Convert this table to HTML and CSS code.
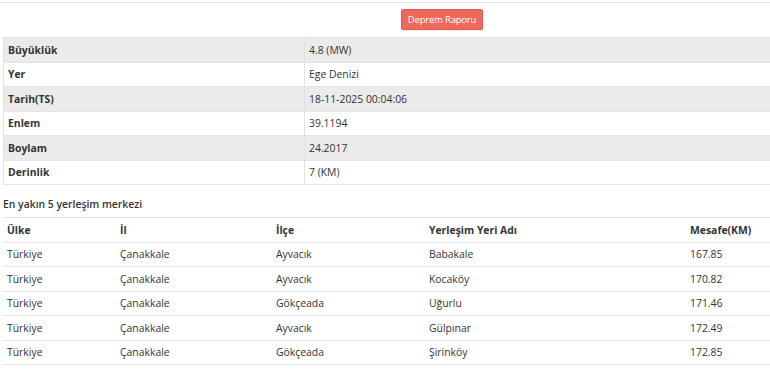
FILE: index.html
```html
<!DOCTYPE html>
<html lang="tr">
<head>
<meta charset="utf-8">
<title>Deprem</title>
<link rel="stylesheet" href="styles.css">
</head>
<body>
<div class="page">
  <div class="toolbar">
    <button class="btn-report">Deprem Raporu</button>
  </div>
  <table class="info">
    <tr><th>Büyüklük</th><td>4.8 (MW)</td></tr>
    <tr><th>Yer</th><td>Ege Denizi</td></tr>
    <tr><th>Tarih(TS)</th><td>18-11-2025 00:04:06</td></tr>
    <tr><th>Enlem</th><td>39.1194</td></tr>
    <tr><th>Boylam</th><td>24.2017</td></tr>
    <tr><th>Derinlik</th><td>7 (KM)</td></tr>
  </table>
  <div class="section-title">En yakın 5 yerleşim merkezi</div>
  <table class="near">
    <thead>
      <tr><th class="c1">Ülke</th><th class="c2">İl</th><th class="c3">İlçe</th><th class="c4">Yerleşim Yeri Adı</th><th class="c5">Mesafe(KM)</th></tr>
    </thead>
    <tbody>
      <tr><td>Türkiye</td><td>Çanakkale</td><td>Ayvacık</td><td>Babakale</td><td>167.85</td></tr>
      <tr><td>Türkiye</td><td>Çanakkale</td><td>Ayvacık</td><td>Kocaköy</td><td>170.82</td></tr>
      <tr><td>Türkiye</td><td>Çanakkale</td><td>Gökçeada</td><td>Uğurlu</td><td>171.46</td></tr>
      <tr><td>Türkiye</td><td>Çanakkale</td><td>Ayvacık</td><td>Gülpınar</td><td>172.49</td></tr>
      <tr><td>Türkiye</td><td>Çanakkale</td><td>Gökçeada</td><td>Şirinköy</td><td>172.85</td></tr>
    </tbody>
  </table>
</div>
</body>
</html>
```
FILE: styles.css
```css
html, body {
  margin: 0;
  padding: 0;
  background: #fff;
}
body {
  font-family: "Open Sans", "Noto Sans", sans-serif;
  font-size: 10.4px;
  color: #333;
  overflow: hidden;
}
.page {
  width: 790px;
  border-top: 1px solid #e2e2e2;
  margin-top: 2px;
}
.toolbar {
  display: flex;
  padding: 6px 0 0 401px;
  height: 34px;
  box-sizing: border-box;
}
.btn-report {
  width: 82px;
  height: 21px;
  background: #f0675b;
  color: #fff;
  border: 1px solid #e65a4e;
  border-radius: 2px;
  font-family: "Open Sans", sans-serif;
  font-size: 9.5px;
  letter-spacing: -0.2px;
  padding: 0;
  box-shadow: 0 1px 1px rgba(0,0,0,0.08);
}
table {
  border-collapse: collapse;
  margin-left: 3px;
}
.info {
  width: 790px;
  border-left: 1px solid #e2e2e2;
}
.info tr {
  height: 24.5px;
}
.info tr:nth-child(odd) {
  background: #ebebeb;
}
.info th, .info td {
  text-align: left;
  padding: 0 0 0 4px;
  border-top: 1px solid #e4e4e4;
  border-bottom: 1px solid #e4e4e4;
}
.info th {
  width: 296px;
  font-weight: 700;
  border-right: 1px solid #e2e2e2;
}
.section-title {
  font-weight: 600;
  padding: 12px 0 0 3px;
  height: 32px;
  box-sizing: border-box;
}
.near {
  width: 790px;
  border-top: 1px solid #e2e2e2;
}
.near tr {
  height: 24.5px;
}
.near th, .near td {
  text-align: left;
  padding: 0 0 0 4px;
  border-bottom: 1px solid #e8e8e8;
}
.near th {
  font-weight: 700;
}
.near .c1 { width: 109px; }
.near .c2 { width: 152px; }
.near .c3 { width: 149px; }
.near .c4 { width: 257px; }
```
